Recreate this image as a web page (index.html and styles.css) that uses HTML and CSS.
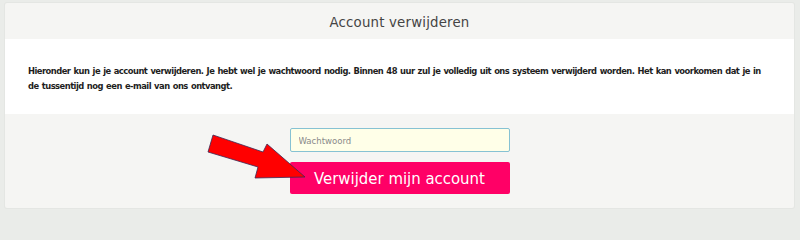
FILE: index.html
```html
<!DOCTYPE html>
<html lang="nl">
<head>
<meta charset="utf-8">
<link rel="stylesheet" href="styles.css">
</head>
<body>
<div class="card">
  <div class="card-header">Account verwijderen</div>
  <div class="card-body">
    <p class="intro">Hieronder kun je je account verwijderen. Je hebt wel je wachtwoord nodig. Binnen 48 uur zul je volledig uit ons systeem verwijderd worden. Het kan voorkomen dat je in de tussentijd nog een e-mail van ons ontvangt.</p>
  </div>
  <div class="card-footer">
    <form class="delete-form">
      <input class="password" type="password" placeholder="Wachtwoord">
      <button class="delete-btn" type="button">Verwijder mijn account</button>
    </form>
    <svg class="arrow" width="800" height="215" viewBox="0 0 800 215">
      <polygon points="213,135 263,152 267,144 305,177 255,178 258,167 208,152" fill="#ff0000" stroke="#3a2a55" stroke-width="0.8" stroke-linejoin="miter"/>
    </svg>
  </div>
</div>
</body>
</html>
```

FILE: styles.css
```css
html {
  height: 215px;
  overflow: hidden;
  background: #eaece9;
}
html, body {
  margin: 0;
  padding: 0;
}
body {
  width: 800px;
  height: 215px;
  padding: 3px 6px 0 5px;
  box-sizing: border-box;
  font-family: "DejaVu Sans Condensed", "DejaVu Sans", sans-serif;
}
.card {
  width: 789px;
  background: #f5f5f3;
  border-radius: 2px;
  box-shadow: 0 0 0 1px #e4e6e3;
}
.card-header {
  height: 36px;
  display: flex;
  align-items: center;
  justify-content: center;
  font-size: 14.8px;
  color: #444444;
  letter-spacing: 0.2px;
}
.card-body {
  height: 75px;
  background: #ffffff;
  box-sizing: border-box;
  padding: 24px 26px 0 23px;
}
.intro {
  margin: 0;
  font-size: 9.3px;
  font-weight: bold;
  letter-spacing: -0.52px;
  word-spacing: 0.7px;
  line-height: 15px;
  color: #1e1e1e;
}
.card-footer {
  height: 94px;
  box-sizing: border-box;
  padding-top: 14px;
}
.delete-form {
  width: 220px;
  margin: 0 auto;
  display: flex;
  flex-direction: column;
  gap: 10px;
}
.password {
  height: 24px;
  box-sizing: border-box;
  border: 1px solid #86c2d3;
  border-radius: 2px;
  background: #ffffe8;
  padding: 0 8px;
  font-family: "DejaVu Sans Condensed", sans-serif;
  font-size: 9.5px;
  color: #555;
  outline: none;
}
.password::placeholder {
  color: #8a8a8a;
}
.delete-btn {
  height: 32px;
  border: none;
  border-radius: 2px;
  background: #ff0066;
  color: #ffffff;
  font-family: "DejaVu Sans Condensed", sans-serif;
  font-size: 16.6px;
  padding: 0;
  cursor: pointer;
}
.arrow {
  position: absolute;
  left: 0;
  top: 0;
  pointer-events: none;
}
```
